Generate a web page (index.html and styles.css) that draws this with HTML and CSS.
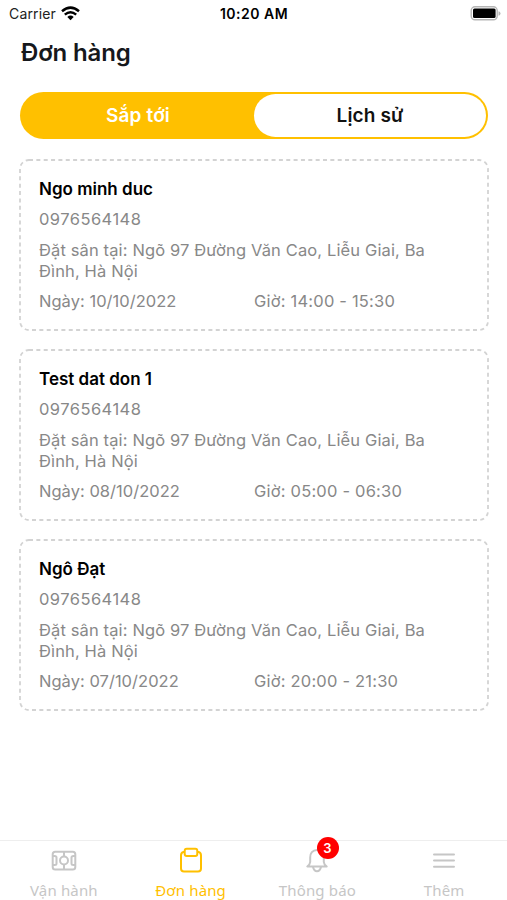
FILE: index.html
```html
<!DOCTYPE html>
<html lang="vi">
<head>
<meta charset="utf-8">
<title>Đơn hàng</title>
<link rel="stylesheet" href="styles.css">
</head>
<body>
<div class="screen">
  <div class="status">
    <div class="carrier"><span>Carrier</span>
      <svg class="wifi" width="19" height="15" viewBox="0 0 19 15" fill="none" stroke="#000" stroke-width="2.5"><path d="M1 5.200Q9.500-2 18 5.200M3.800 8.600Q9.500 3.800 15.200 8.600"/><path d="M6.300 10.900Q9.500 8.200 12.700 10.900L9.500 14.200Z" fill="#000" stroke="none"/></svg>
    </div>
    <time class="clock">10:20 AM</time>
    <svg class="battery" width="31" height="15" viewBox="0 0 31 15"><rect x="1.200" y=".8" width="26" height="13" rx="3.800" fill="#fff" stroke="#b5b5b5" stroke-width="1.400"/><rect x="3" y="2.600" width="22.600" height="9.400" rx="1.500"/><path d="M28.500 5.200q2 .5 2 2.300t-2 2.300z" fill="#b5b5b5"/></svg>
  </div>
  <h1 class="title">Đơn hàng</h1>
  <div class="tabs"><button class="tab">Sắp tới</button><button class="tab tab-active">Lịch sử</button></div>
  <main class="orders">
    <article class="order">
      <svg class="outline"><rect x="1" y="1" width="468" height="170" rx="9"/></svg>
      <h2 class="name">Ngo minh duc</h2>
      <p class="phone">0976564148</p>
      <p class="place">Đặt sân tại: Ngõ 97 Đường Văn Cao, Liễu Giai, Ba Đình, Hà Nội</p>
      <div class="when"><span>Ngày: 10/10/2022</span><span class="time">Giờ: 14:00 - 15:30</span></div>
    </article>
    <article class="order">
      <svg class="outline"><rect x="1" y="1" width="468" height="170" rx="9"/></svg>
      <h2 class="name">Test dat don 1</h2>
      <p class="phone">0976564148</p>
      <p class="place">Đặt sân tại: Ngõ 97 Đường Văn Cao, Liễu Giai, Ba Đình, Hà Nội</p>
      <div class="when"><span>Ngày: 08/10/2022</span><span class="time">Giờ: 05:00 - 06:30</span></div>
    </article>
    <article class="order">
      <svg class="outline"><rect x="1" y="1" width="468" height="170" rx="9"/></svg>
      <h2 class="name">Ngô Đạt</h2>
      <p class="phone">0976564148</p>
      <p class="place">Đặt sân tại: Ngõ 97 Đường Văn Cao, Liễu Giai, Ba Đình, Hà Nội</p>
      <div class="when"><span>Ngày: 07/10/2022</span><span class="time">Giờ: 20:00 - 21:30</span></div>
    </article>
  </main>
  <nav class="nav">
    <a class="item">
      <svg width="28" height="28" viewBox="0 0 28 28"><rect x="2.700" y="4.700" width="22.600" height="17.800" rx="2.500"/><path d="M14 4.700V9.500M14 17.500V22.500M2.700 9H4.500Q6.500 9 6.500 10.500V16.500Q6.500 18 4.500 18H2.700M25.300 9H23.500Q21.500 9 21.500 10.500V16.500Q21.500 18 23.500 18H25.300"/><circle cx="14" cy="13.500" r="4"/></svg>
      <span>Vận hành</span>
    </a>
    <a class="item item-active">
      <svg width="28" height="28" viewBox="0 0 28 28"><path d="M8 5H6.500Q4 5.500 4 8.500V21.500Q4 24.500 7 24.500H21Q24 24.500 24 21.500V8.500Q24 5.500 21.500 5H20"/><rect x="7.700" y="1.800" width="12.600" height="7.200" rx="2"/></svg>
      <span>Đơn hàng</span>
    </a>
    <a class="item">
      <svg width="28" height="28" viewBox="0 0 28 28"><path d="M14 3C9.500 3 7.200 6.500 7.200 10.500V15Q7 17.500 4.300 19.500H23.700Q21 17.500 20.800 15V10.500C20.800 6.500 18.500 3 14 3ZM10 20Q11 24.200 14 24.200T18 20"/></svg>
      <b class="badge">3</b>
      <span>Thông báo</span>
    </a>
    <a class="item">
      <svg width="28" height="28" viewBox="0 0 28 28"><path d="M4 7.500H24M4 13.500H24M4 19.700H24" stroke-linecap="round"/></svg>
      <span>Thêm</span>
    </a>
  </nav>
</div>
</body>
</html>
```
FILE: styles.css
```css
* { box-sizing: border-box; margin: 0; padding: 0; }
body { background: #fff; font-family: Inter, sans-serif; color: #16181c; }
.screen { width: 507px; height: 900px; display: flex; flex-direction: column; overflow: hidden; }
.status { height: 27px; padding: 0 6px 0 9px; display: grid; grid-template-columns: 1fr auto 1fr; align-items: center; font-size: 14px; }
.carrier { display: flex; align-items: center; gap: 5px; letter-spacing: .15px; color: #222; }
.wifi { display: block; }
.clock { font-weight: 600; letter-spacing: .5px; color: #000; transform: translateX(-1px); }
.battery { justify-self: end; }
.title { height: 49px; margin-top: 1px; padding-left: 21px; font-size: 24px; line-height: 49px; font-weight: 600; letter-spacing: -.15px; }
.tabs { margin: 15px 19px 0 20px; height: 47px; padding: 2px; border-radius: 24px; background: #ffc000; display: grid; grid-template-columns: 1fr 1fr; }
.tab { border: 0; background: transparent; border-radius: 22px; color: #fff; font: 600 19px Inter, sans-serif; letter-spacing: .15px; }
.tab-active { background: #fff; color: #111; }
.orders { flex: 1; padding: 20px 18px 0 19px; display: flex; flex-direction: column; gap: 18px; }
.order { position: relative; height: 172px; padding: 20px; color: #888; font-size: 16.5px; line-height: 21px; }
.outline { position: absolute; left: 0; top: 0; width: 470px; height: 172px; fill: none; stroke: #d3d3d3; stroke-width: 1.8; stroke-dasharray: 4 3.35; }
.name { font-size: 17px; font-weight: 600; line-height: 20px; color: #000; }
.phone { margin-top: 10px; letter-spacing: .45px; }
.place { margin-top: 10px; width: 400px; letter-spacing: .13px; }
.when { margin-top: 9px; display: grid; grid-template-columns: 215px 1fr; letter-spacing: .03px; }
.time { letter-spacing: .2px; }
.nav { height: 60px; border-top: 1px solid #eee; display: grid; grid-template-columns: repeat(4, 1fr); }
.item { position: relative; display: flex; flex-direction: column; align-items: center; padding: 6px 0 0 1px; gap: 3px; color: #c6c6c6; font: 15px/24px "Noto Sans", sans-serif; letter-spacing: .15px; }
.item svg { fill: none; stroke: currentColor; stroke-width: 2; stroke-linejoin: round; }
.item-active { color: #ffc000; }
.badge { position: absolute; left: 63px; top: -4px; width: 22px; height: 22px; border-radius: 50%; background: #f00; color: #fff; font: 600 13px/22px Inter, sans-serif; text-align: center; }
```
